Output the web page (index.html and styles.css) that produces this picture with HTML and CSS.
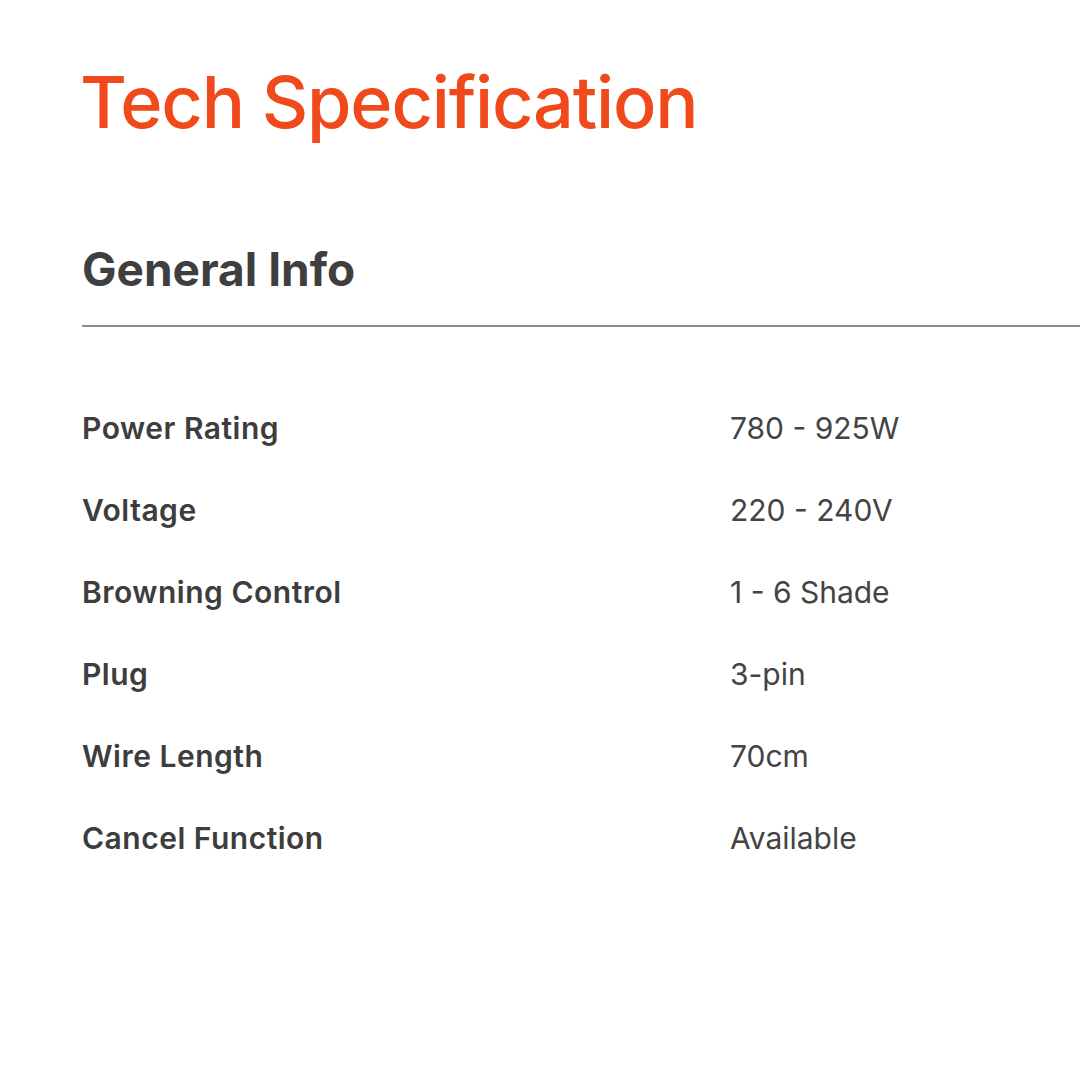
FILE: index.html
```html
<!DOCTYPE html>
<html lang="en">
<head>
<meta charset="utf-8">
<title>Tech Specification</title>
<link rel="stylesheet" href="styles.css">
</head>
<body>
<main class="spec">
  <h1 class="spec-title">Tech Specification</h1>
  <section class="spec-group">
    <h2 class="group-title">General Info</h2>
    <dl class="spec-list">
      <div class="spec-row"><dt>Power Rating</dt><dd>780 - 925W</dd></div>
      <div class="spec-row"><dt>Voltage</dt><dd>220 - 240V</dd></div>
      <div class="spec-row"><dt>Browning Control</dt><dd>1 - 6 Shade</dd></div>
      <div class="spec-row"><dt>Plug</dt><dd>3-pin</dd></div>
      <div class="spec-row"><dt>Wire Length</dt><dd>70cm</dd></div>
      <div class="spec-row"><dt>Cancel Function</dt><dd>Available</dd></div>
    </dl>
  </section>
</main>
</body>
</html>
```

FILE: styles.css
```css
html, body {
  margin: 0;
  padding: 0;
  background: #ffffff;
}
body {
  font-family: Inter, "Noto Sans", "Liberation Sans", sans-serif;
  color: #3d3d3d;
}
.spec {
  padding: 59px 0 0 82px;
}
.spec-title {
  margin: 0;
  margin-left: -2px;
  font-size: 72px;
  line-height: 86px;
  font-weight: 500;
  letter-spacing: -1.2px;
  color: #f04a1c;
}
.spec-group {
  margin-top: 96px;
}
.group-title {
  margin: 0;
  font-size: 46px;
  line-height: 56px;
  font-weight: 700;
  letter-spacing: 0;
  color: #3f3f3f;
  padding-bottom: 28px;
  border-bottom: 2px solid #8c8c8c;
}
.spec-list {
  margin: 0;
  padding-top: 83px;
  display: flex;
  flex-direction: column;
  gap: 46px;
}
.spec-row {
  display: grid;
  grid-template-columns: 648px 1fr;
  font-size: 30px;
  line-height: 36px;
}
.spec-row dt {
  font-weight: 600;
  color: #3d3d3d;
  letter-spacing: 0.5px;
}
.spec-row dd {
  margin: 0;
  font-weight: 400;
  color: #444444;
  letter-spacing: 0;
}
```
